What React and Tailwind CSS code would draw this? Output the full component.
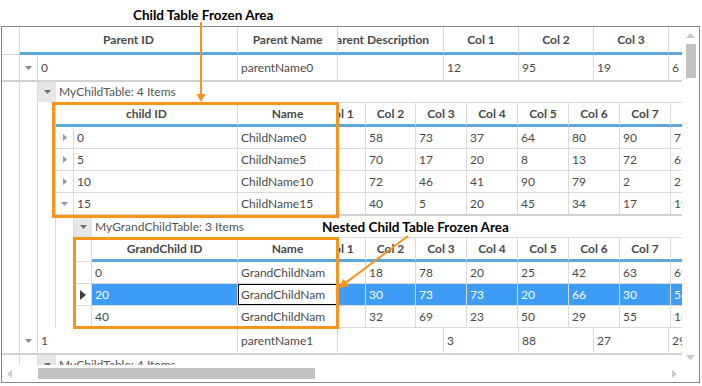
import React from "react";

const G = "border-[#dadada]";
const BLUE_SEL = "bg-[#3d9cf5] text-white";

function Tri({ w, h, dir, color }) {
  let pts;
  if (dir === "down") pts = `0,0 ${w},0 ${w / 2},${h}`;
  else if (dir === "up") pts = `0,${h} ${w},${h} ${w / 2},0`;
  else if (dir === "right") pts = `0,0 ${w},${h / 2} 0,${h}`;
  else pts = `${w},0 0,${h / 2} ${w},${h}`;
  return (
    <svg width={w} height={h} viewBox={`0 0 ${w} ${h}`} className="block">
      <polygon points={pts} fill={color} />
    </svg>
  );
}

function HCell({ w, children }) {
  return (
    <div
      className={`${w} shrink-0 h-full border-r border-r-[#dadada] border-b-[3px] border-b-[#5ea7db] flex items-center justify-center font-bold text-[#4a4a4a] whitespace-nowrap overflow-hidden`}
    >
      {children}
    </div>
  );
}

function DCell({ w, children, className = "" }) {
  return (
    <div
      className={`${w} shrink-0 h-full border-r ${G} flex items-center pl-[3px] whitespace-nowrap overflow-hidden ${className}`}
    >
      {children}
    </div>
  );
}

function Blank({ className = "" }) {
  return <div className={`w-[18px] shrink-0 border-r ${G} ${className}`} />;
}

function Scroll({ children }) {
  return (
    <div className="flex-1 min-w-0 h-full overflow-hidden">
      <div className="flex h-full ml-[-23px]">{children}</div>
    </div>
  );
}

const PW = ["w-[129px]", "w-[75px]", "w-[75px]", "w-[75px]", "w-[75px]"];
const CW = [
  "w-[51px]",
  "w-[50px]",
  "w-[51px]",
  "w-[51px]",
  "w-[51px]",
  "w-[51px]",
  "w-[51px]",
  "w-[51px]",
];

function ParentRow({ id, name, vals }) {
  return (
    <div className="flex h-[27px] border-b-2 border-b-[#d2d2d2]">
      <Blank className="h-full" />
      <div className={`w-[18px] shrink-0 h-full border-r ${G} flex items-center justify-center`}>
        <Tri w={7} h={4} dir="down" color="#8a8a8a" />
      </div>
      <DCell w="w-[200px]">{id}</DCell>
      <DCell w="w-[100px]">{name}</DCell>
      <Scroll>
        <DCell w={PW[0]}></DCell>
        {vals.map((v, i) => (
          <DCell key={i} w={PW[i + 1]}>
            {v}
          </DCell>
        ))}
      </Scroll>
    </div>
  );
}

function Caption({ h, text }) {
  return (
    <div className={`flex ${h}`}>
      <div className="w-[18px] shrink-0 h-full bg-[#e6e6e6] flex items-center justify-center">
        <Tri w={7} h={4} dir="down" color="#707070" />
      </div>
      <div className="flex items-center pl-[3px] text-[#555555] whitespace-nowrap">{text}</div>
    </div>
  );
}

function ColHeaders() {
  return CW.map((w, i) => (
    <HCell key={i} w={w}>
      {`Col ${i + 1}`}
    </HCell>
  ));
}

const childRows = [
  { id: "0", name: "ChildName0", v: ["", "58", "73", "37", "64", "80", "90", "71"] },
  { id: "5", name: "ChildName5", v: ["", "70", "17", "20", "8", "13", "72", "69"] },
  { id: "10", name: "ChildName10", v: ["", "72", "46", "41", "90", "79", "2", "23"] },
];

const gcRows = [
  { id: "0", v: ["", "18", "78", "20", "25", "42", "63", "69"] },
  { id: "20", v: ["", "30", "73", "73", "20", "66", "30", "56"], sel: true },
  { id: "40", v: ["", "32", "69", "23", "50", "29", "55", "16"] },
];

function ChildRow({ r, expanded }) {
  return (
    <div
      className={`flex ${expanded ? "h-[23px] border-b-2 border-b-[#d2d2d2]" : `h-[22px] border-b ${G}`}`}
    >
      <div className={`w-[18px] shrink-0 h-full border-r ${G} flex items-center justify-center`}>
        {expanded ? (
          <Tri w={7} h={4} dir="down" color="#959595" />
        ) : (
          <Tri w={4} h={7} dir="right" color="#959595" />
        )}
      </div>
      <DCell w="w-[164px]">{r.id}</DCell>
      <DCell w="w-[100px]">{r.name}</DCell>
      <Scroll>
        {r.v.map((v, i) => (
          <DCell key={i} w={CW[i]}>
            {v}
          </DCell>
        ))}
      </Scroll>
    </div>
  );
}

function GcRow({ r }) {
  return (
    <div className={`flex h-[22px] border-b ${G}`}>
      <div className={`w-[18px] shrink-0 h-full border-r ${G} flex items-center justify-center bg-white`}>
        {r.sel ? <Tri w={6} h={10} dir="right" color="#3f3f3f" /> : null}
      </div>
      <DCell w="w-[146px]" className={r.sel ? BLUE_SEL : ""}>
        {r.id}
      </DCell>
      <DCell
        w="w-[100px]"
        className={r.sel ? "bg-white outline outline-1 outline-black -outline-offset-1" : ""}
      >
        GrandChildNam
      </DCell>
      <Scroll>
        {r.v.map((v, i) => (
          <DCell key={i} w={CW[i]} className={r.sel ? BLUE_SEL : ""}>
            {v}
          </DCell>
        ))}
      </Scroll>
    </div>
  );
}

function Grid() {
  return (
    <div className="flex flex-col text-[12px] text-[#4b4b4b]">
      {/* parent header */}
      <div className="flex h-[28px]">
        <div className={`w-[18px] shrink-0 h-full border-r border-b ${G}`} />
        <HCell w="w-[218px]">Parent ID</HCell>
        <HCell w="w-[100px]">Parent Name</HCell>
        <Scroll>
          <HCell w={PW[0]}>Parent Description</HCell>
          <HCell w={PW[1]}>Col 1</HCell>
          <HCell w={PW[2]}>Col 2</HCell>
          <HCell w={PW[3]}>Col 3</HCell>
          <HCell w={PW[4]}>Col 4</HCell>
        </Scroll>
      </div>

      <ParentRow id="0" name="parentName0" vals={["12", "95", "19", "6"]} />

      {/* parent 0 details */}
      <div className="flex">
        <Blank />
        <Blank />
        <div className="flex-1 min-w-0 flex flex-col">
          <Caption h="h-[20px]" text="MyChildTable: 4 Items" />
          <div className="flex">
            <Blank />
            <div className="flex-1 min-w-0 flex flex-col">
              <div className={`flex h-[25px] border-t ${G}`}>
                <HCell w="w-[182px]">child ID</HCell>
                <HCell w="w-[100px]">Name</HCell>
                <Scroll>
                  <ColHeaders />
                </Scroll>
              </div>
              {childRows.map((r) => (
                <ChildRow key={r.id} r={r} />
              ))}
              <ChildRow
                r={{ id: "15", name: "ChildName15", v: ["", "40", "5", "20", "45", "34", "17", "19"] }}
                expanded
              />
              {/* row 15 details */}
              <div className="flex">
                <Blank />
                <div className="flex-1 min-w-0 flex flex-col">
                  <Caption h="h-[21px]" text="MyGrandChildTable: 3 Items" />
                  <div className={`flex h-[25px] border-t ${G}`}>
                    <div className={`w-[18px] shrink-0 h-full border-r border-b ${G}`} />
                    <HCell w="w-[146px]">GrandChild ID</HCell>
                    <HCell w="w-[100px]">Name</HCell>
                    <Scroll>
                      <ColHeaders />
                    </Scroll>
                  </div>
                  {gcRows.map((r) => (
                    <GcRow key={r.id} r={r} />
                  ))}
                </div>
              </div>
            </div>
          </div>
        </div>
      </div>

      <ParentRow id="1" name="parentName1" vals={["3", "88", "27", "29"]} />

      <div className="flex h-[20px]">
        <Blank className="h-full" />
        <Blank className="h-full" />
        <div className="flex-1 min-w-0">
          <Caption h="h-[20px]" text="MyChildTable: 4 Items" />
        </div>
      </div>
    </div>
  );
}

function VScroll() {
  return (
    <div className="w-[17px] h-full flex flex-col items-center bg-white">
      <div className="pt-[6px]">
        <Tri w={9} h={5} dir="up" color="#c9c9c9" />
      </div>
      <div className="mt-[6px] w-[10px] h-[34px] bg-[#c2c2c2]" />
      <div className="flex-1" />
      <div className="pb-[5px]">
        <Tri w={9} h={5} dir="down" color="#c9c9c9" />
      </div>
    </div>
  );
}

function HScroll() {
  return (
    <div className="w-[680px] h-full flex items-center bg-white">
      <div className="ml-[5px]">
        <Tri w={5} h={8} dir="left" color="#c9c9c9" />
      </div>
      <div className="ml-[26px] w-[277px] h-[11px] bg-[#c2c2c2]" />
      <div className="flex-1" />
      <div className="mr-[5px]">
        <Tri w={5} h={8} dir="right" color="#c9c9c9" />
      </div>
    </div>
  );
}

function Annotations() {
  const O = "#f7941d";
  return (
    <>
      <div className="absolute left-[52px] top-[102px] w-[287px] h-[116px] border-[3px] border-[#f7941d]" />
      <div className="absolute left-[73px] top-[237px] w-[266px] h-[92px] border-[3px] border-[#f7941d]" />
      <div className="absolute left-[133px] top-[6px] text-[13.5px] leading-[18px] font-bold text-black whitespace-nowrap">
        Child Table Frozen Area
      </div>
      <div className="absolute left-[322px] top-[218px] text-[13.5px] leading-[18px] font-bold text-black whitespace-nowrap">
        Nested Child Table Frozen Area
      </div>
      <svg className="absolute left-0 top-0 pointer-events-none" width="702" height="386" viewBox="0 0 702 386">
        <line x1="201" y1="22" x2="201" y2="96" stroke={O} strokeWidth="2" />
        <polygon points="196.5,94 205.5,94 201,102" fill={O} />
        <line x1="408" y1="236" x2="346" y2="282.6" stroke={O} strokeWidth="2" />
        <polygon points="339,288 349,286.2 343.4,278.8" fill={O} />
      </svg>
    </>
  );
}

export default function App() {
  return (
    <div className="relative w-[702px] h-[386px] bg-white font-['Lato',sans-serif] overflow-hidden">
      <div className="pt-[26px] pl-[1px]">
        <div className="w-[699px] h-[357px] border border-[#858585] flex flex-col">
          <div className="flex h-[338px]">
            <div className="w-[680px] h-full overflow-hidden">
              <Grid />
            </div>
            <VScroll />
          </div>
          <div className="flex h-[17px]">
            <HScroll />
            <div className="w-[17px]" />
          </div>
        </div>
      </div>
      <Annotations />
    </div>
  );
}
